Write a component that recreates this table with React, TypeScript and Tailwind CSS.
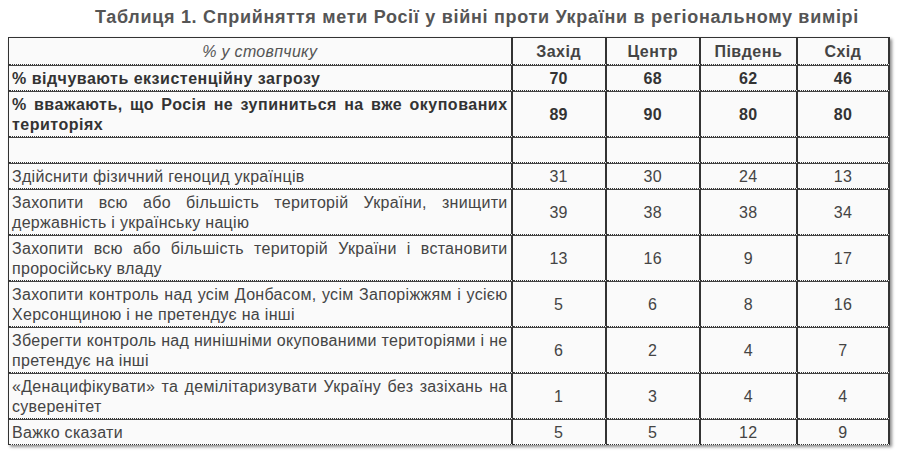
const rows: { label: string; values: (number | null)[]; bold?: boolean }[] = [
  { label: "% відчувають екзистенційну загрозу", values: [70, 68, 62, 46], bold: true },
  {
    label: "% вважають, що Росія не зупиниться на вже окупованих територіях",
    values: [89, 90, 80, 80],
    bold: true,
  },
  { label: "", values: [null, null, null, null] },
  { label: "Здійснити фізичний геноцид українців", values: [31, 30, 24, 13] },
  {
    label: "Захопити всю або більшість територій України, знищити державність і українську націю",
    values: [39, 38, 38, 34],
  },
  {
    label: "Захопити всю або більшість територій України і встановити проросійську владу",
    values: [13, 16, 9, 17],
  },
  {
    label: "Захопити контроль над усім Донбасом, усім Запоріжжям і усією Херсонщиною і не претендує на інші",
    values: [5, 6, 8, 16],
  },
  {
    label: "Зберегти контроль над нинішніми окупованими територіями і не претендує на інші",
    values: [6, 2, 4, 7],
  },
  {
    label: "«Денацифікувати» та демілітаризувати Україну без зазіхань на суверенітет",
    values: [1, 3, 4, 4],
  },
  { label: "Важко сказати", values: [5, 5, 12, 9] },
];

const regions = ["Захід", "Центр", "Південь", "Схід"];

// separate borders: dotted line under a row, solid line on top of the next
const lines = { borderTopStyle: "solid", borderRightStyle: "solid" } as const;

export default function App() {
  return (
    <div
      className="h-[453px] w-[898px] bg-white"
      style={{ fontFamily: '"Liberation Sans", Arial, sans-serif' }}
    >
      <h1 className="pl-[56px] pt-[6px] text-center text-[18px] font-bold leading-[22px] tracking-[0.7px] text-[#555]">
        Таблиця 1. Сприйняття мети Росії у війні проти України в регіональному вимірі
      </h1>
      <div className="ml-[8px] mt-[9px] w-[882px] border-l border-t border-[#333] bg-[#fafafa] shadow-[2px_2px_3px_rgba(0,0,0,0.45)]">
        <table className="w-full border-separate border-spacing-0 text-[16px] leading-[20px] tracking-[0.3px] text-[#444]">
          <colgroup>
            <col className="w-[503px]" />
            <col className="w-[94px]" />
            <col className="w-[94px]" />
            <col className="w-[97px]" />
            <col className="w-[92px]" />
          </colgroup>
          <thead>
            <tr>
              <th
                className="border-r-2 border-b border-dotted border-[#333] px-[3px] pt-[4px] pb-[2px] text-center font-normal italic text-[#555]"
                style={{ borderRightStyle: "solid" }}
              >
                % у стовпчику
              </th>
              {regions.map((r) => (
                <th
                  key={r}
                  className="border-r-2 border-b border-dotted border-[#333] px-[3px] pt-[4px] pb-[2px] text-center font-bold tracking-[0.5px] text-[#444]"
                  style={{ borderRightStyle: "solid" }}
                >
                  {r}
                </th>
              ))}
            </tr>
          </thead>
          <tbody>
            {rows.map((row, i) => (
              <tr key={i}>
                <td
                  className={`border-t border-t-[#444] border-b border-dotted border-b-[#333] border-r-2 border-r-[#333] px-[3px] pt-[3px] pb-[1px] text-justify ${
                    row.bold ? "font-bold tracking-[0.5px] text-[#333]" : ""
                  }`}
                  style={lines}
                >
                  {row.label || "\u00a0"}
                </td>
                {row.values.map((v, j) => (
                  <td
                    key={j}
                    className={`border-t border-t-[#444] border-b border-dotted border-b-[#333] border-r-2 border-r-[#333] px-[3px] pt-[3px] pb-[1px] text-center ${
                      row.bold ? "font-bold text-[#333]" : ""
                    }`}
                    style={lines}
                  >
                    {v ?? ""}
                  </td>
                ))}
              </tr>
            ))}
          </tbody>
        </table>
      </div>
    </div>
  );
}
